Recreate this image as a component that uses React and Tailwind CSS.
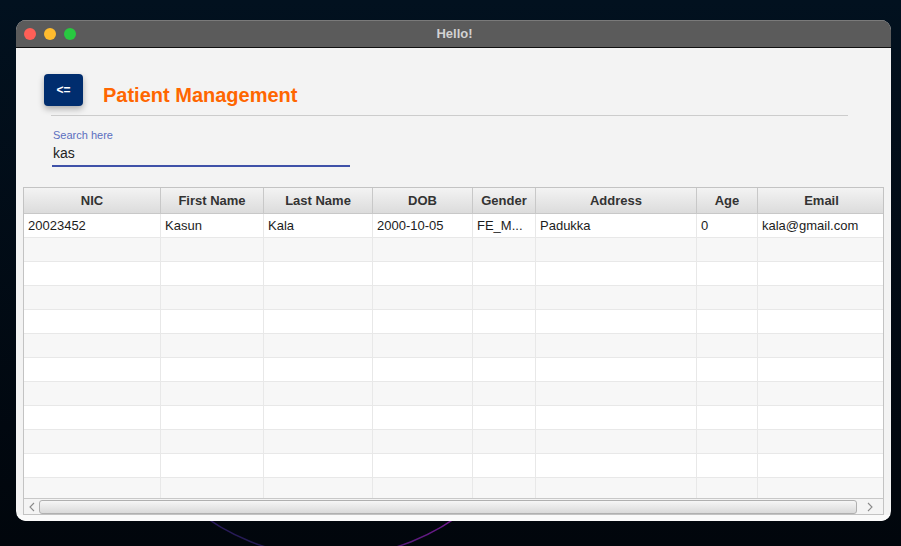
import React from "react";

const columns = [
  { name: "NIC", w: "w-[137px]" },
  { name: "First Name", w: "w-[103px]" },
  { name: "Last Name", w: "w-[109px]" },
  { name: "DOB", w: "w-[100px]" },
  { name: "Gender", w: "w-[63px]" },
  { name: "Address", w: "w-[161px]" },
  { name: "Age", w: "w-[61px]" },
  { name: "Email", w: "w-[127px]" },
];

const patients = [
  ["20023452", "Kasun", "Kala", "2000-10-05", "FE_M...", "Padukka", "0", "kala@gmail.com"],
];

const TOTAL_ROWS = 12;

const Chevron = ({ dir }) => (
  <svg width="6" height="10" viewBox="0 0 6 10">
    <path
      d={dir === "left" ? "M5 1 L1 5 L5 9" : "M1 1 L5 5 L1 9"}
      fill="none"
      stroke="#8a8a8a"
      strokeWidth="1.1"
    />
  </svg>
);

const App = () => {
  const rows = Array.from({ length: TOTAL_ROWS }, (_, i) => patients[i] || null);

  return (
    <div className="relative w-[901px] h-[546px] overflow-hidden bg-gradient-to-b from-[#02111f] to-[#01060c] pt-[20px] pl-[16px] font-['Liberation_Sans',Arial,sans-serif]">
      {/* desktop wallpaper arc */}
      <svg className="absolute left-0 top-0" width="901" height="546" viewBox="0 0 901 546">
        <defs>
          <linearGradient id="arc" x1="0" y1="0" x2="1" y2="0">
            <stop offset="0" stopColor="#3a1c70" />
            <stop offset="0.45" stopColor="#1c1a48" />
            <stop offset="0.75" stopColor="#6a1a8a" />
            <stop offset="1" stopColor="#d020d0" />
          </linearGradient>
        </defs>
        <circle cx="331" cy="339" r="218" fill="none" stroke="url(#arc)" strokeWidth="1.5" />
      </svg>

      {/* Window */}
      <div className="relative w-[875px] h-[501px] rounded-[10px] overflow-hidden bg-[#f3f3f3] flex flex-col">
        {/* Title bar */}
        <div className="relative h-[28px] bg-[#5b5b5b] border-t border-[#7a7a7a] border-b border-b-[#111] flex items-center justify-center shrink-0">
          <div className="absolute left-[8px] top-[7px] flex gap-[8px]">
            <span className="w-[12px] h-[12px] rounded-full bg-[#fe5f57]" />
            <span className="w-[12px] h-[12px] rounded-full bg-[#febb2e]" />
            <span className="w-[12px] h-[12px] rounded-full bg-[#28c840]" />
          </div>
          <span className="text-[13px] font-bold text-[#d2d2d2] ml-[2px]">Hello!</span>
        </div>

        {/* Header */}
        <div className="flex items-start pt-[26px] pl-[28px]">
          <button className="w-[39px] h-[32px] rounded-[4px] bg-[#002d6e] text-white text-[12px] font-bold shadow-[0_3px_6px_rgba(0,0,0,0.3)]">
            &lt;=
          </button>
          <h1 className="ml-[20px] mt-[10px] text-[20px] leading-[23px] font-bold text-[#ff6600]">
            Patient Management
          </h1>
        </div>
        <div className="ml-[35px] w-[797px] h-px bg-[#cccccc] mt-[8px]" />

        {/* Search */}
        <div className="ml-[36px] mt-[13px] w-[298px]">
          <div className="text-[11px] leading-[13px] text-[#5b6fc0] ml-[1px]">Search here</div>
          <div className="text-[14px] leading-[17px] text-[#222] ml-[1px] mt-[3px]">kas</div>
          <div className="h-[2px] bg-[#3f51a8] mt-[3px]" />
        </div>

        {/* Table */}
        <div className="mx-[7px] mt-[20px] border border-[#c3c3c3] bg-white">
          <div className="flex h-[26px] bg-gradient-to-b from-[#f3f3f3] to-[#dcdcdc] border-b border-[#c8c8c8]">
            {columns.map((c, i) => (
              <div
                key={c.name}
                className={`${c.w} shrink-0 flex items-center justify-center pt-[1px] text-[13px] font-bold text-[#333] ${
                  i < columns.length - 1 ? "border-r border-[#c8c8c8]" : ""
                }`}
              >
                {c.name}
              </div>
            ))}
          </div>
          <div className="h-[284px] overflow-hidden">
            {rows.map((row, r) => (
              <div
                key={r}
                className={`flex h-[24px] border-b border-[#e8e8e8] ${r % 2 === 0 ? "bg-white" : "bg-[#f7f7f7]"}`}
              >
                {columns.map((c, i) => (
                  <div
                    key={c.name}
                    className={`${c.w} shrink-0 flex items-center px-[4px] text-[13px] text-[#1c1c1c] whitespace-nowrap overflow-hidden ${
                      i < columns.length - 1 ? "border-r border-[#e8e8e8]" : ""
                    }`}
                  >
                    {row ? row[i] : ""}
                  </div>
                ))}
              </div>
            ))}
          </div>
          {/* Horizontal scrollbar */}
          <div className="flex items-center h-[16px] bg-[#f4f4f4] border-t border-[#c8c8c8]">
            <span className="w-[15px] flex justify-center">
              <Chevron dir="left" />
            </span>
            <div className="w-[818px] h-[14px] rounded-[3px] border border-[#b0b0b0] bg-gradient-to-b from-[#f6f6f6] to-[#dadada]" />
            <span className="flex-1 flex justify-center">
              <Chevron dir="right" />
            </span>
          </div>
        </div>
        <div className="flex-1 bg-[#fafafa]" />
      </div>
    </div>
  );
};

export default App;
